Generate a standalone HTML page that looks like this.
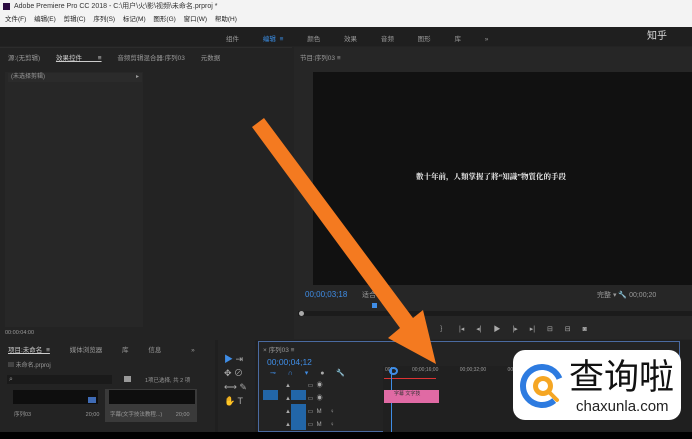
<!DOCTYPE html>
<html><head><meta charset="utf-8"><style>
*{margin:0;padding:0;box-sizing:border-box}
body{width:692px;height:439px;overflow:hidden;background:#232323;font-family:"Liberation Sans","Noto Sans CJK SC",sans-serif;position:relative;color:#9a9a9a;font-size:7px}
.a{position:absolute;white-space:nowrap}
</style></head><body>
<div class="a" style="left:0;top:0;width:692px;height:13px;background:#f3f3f3;color:#333;font-size:7px;line-height:13px;padding-left:14px">Adobe Premiere Pro CC 2018 - C:\用户\火\影\视频\未命名.prproj *</div>
<div class="a" style="left:3px;top:3px;width:7px;height:7px;background:#2a0a40"></div>
<div class="a" style="left:0;top:13px;width:692px;height:14px;background:#f3f3f3;color:#222;font-size:6.5px;line-height:14px;padding-left:5px;word-spacing:6px">文件(F) 编辑(E) 剪辑(C) 序列(S) 标记(M) 图形(G) 窗口(W) 帮助(H)</div>
<div class="a" style="left:0;top:27px;width:692px;height:19px;background:#1f1f1f"></div>
<div class="a" style="left:226px;top:33px;font-size:6.5px;word-spacing:22px">组件 <span style="color:#3a8ee6;word-spacing:2px">编辑 ≡</span> 颜色 效果 音频 图形 库 »</div>
<div class="a" style="left:647px;top:27px;color:#ddd;font-size:10px">知乎</div>
<!-- left panel -->
<div class="a" style="left:0;top:47px;width:292px;height:292px;background:#232323;border-top:1px solid #2c2c2c"></div>
<div class="a" style="left:8px;top:52px;font-size:6.5px;word-spacing:14px">源:(无剪辑) <span style="color:#ccc;text-decoration:underline">效果控件 ≡</span> 音频剪辑混合器:序列03 元数据</div>
<div class="a" style="left:5px;top:72px;width:138px;height:255px;background:#272727"></div>
<div class="a" style="left:8px;top:73px;width:134px;height:9px;background:#2b2b2b;font-size:6px;line-height:9px;padding-left:3px">(未选择剪辑)<span style="float:right;margin-right:3px">▸</span></div>
<div class="a" style="left:5px;top:330px;font-size:5.5px">00:00:04:00</div>
<!-- program monitor -->
<div class="a" style="left:294px;top:47px;width:398px;height:292px;background:#262626"></div>
<div class="a" style="left:300px;top:52px;font-size:6.5px">节目:序列03 ≡</div>
<div class="a" style="left:313px;top:72px;width:379px;height:213px;background:#111"></div>
<div class="a" style="left:416px;top:171px;color:#eee;font-size:7.5px;font-family:'Liberation Serif','Noto Serif CJK SC',serif;font-weight:bold">數十年前，人類掌握了將“知識”物質化的手段</div>
<div class="a" style="left:305px;top:290px;color:#3f8de6;font-size:8px">00;00;03;18</div>
<div class="a" style="left:362px;top:290px;font-size:7px">适合 ▾</div>
<div class="a" style="left:597px;top:290px;font-size:7px">完整 ▾  🔧 00;00;20</div>
<div class="a" style="left:372px;top:303px;width:5px;height:5px;background:#3f8de6"></div>
<div class="a" style="left:298px;top:311px;width:394px;height:5px;background:#1b1b1b"></div>
<div class="a" style="left:299px;top:311px;width:5px;height:5px;border-radius:50%;background:#aaa"></div>
<div class="a" style="left:440px;top:324px;font-size:7px;word-spacing:10px;color:#aaa">｝ |◂ ◂| ▶ |▸ ▸| ⊟ ⊟ ◙</div>
<!-- bottom area -->
<div class="a" style="left:0;top:340px;width:692px;height:92px;background:#1f1f1f"></div>
<div class="a" style="left:0;top:340px;width:215px;height:92px;background:#232323"></div>
<div class="a" style="left:8px;top:344px;font-size:6.5px;word-spacing:18px"><span style="color:#ccc;text-decoration:underline;word-spacing:2px">项目:未命名 ≡</span> 媒体浏览器 库 信息 <span style="margin-left:10px">»</span></div>
<div class="a" style="left:8px;top:360px;font-size:6px">▤ 未命名.prproj</div>
<div class="a" style="left:7px;top:375px;width:105px;height:9px;background:#1a1a1a;font-size:7px;line-height:9px;padding-left:2px">⌕</div>
<div class="a" style="left:124px;top:376px;width:7px;height:6px;background:#999"></div>
<div class="a" style="left:145px;top:376px;font-size:5.5px">1项已选择, 共 2 项</div>
<div class="a" style="left:13px;top:390px;width:85px;height:14px;background:#0e0e0e"></div>
<div class="a" style="left:88px;top:397px;width:8px;height:6px;background:#3f6bb5"></div>
<div class="a" style="left:105px;top:389px;width:92px;height:33px;background:#3a3a3a"></div>
<div class="a" style="left:109px;top:390px;width:86px;height:14px;background:#0e0e0e"></div>
<div class="a" style="left:14px;top:410px;font-size:5.5px">序列03 <span style="margin-left:53px">20;00</span></div>
<div class="a" style="left:110px;top:410px;font-size:5.5px">字幕(文字技法教程...) <span style="margin-left:12px">20;00</span></div>
<!-- tools -->
<div class="a" style="left:218px;top:340px;width:37px;height:92px;background:#232323"></div>
<div class="a" style="left:224px;top:352px;font-size:9px;line-height:14px;color:#aaa;white-space:pre"><span style="color:#3f8de6">▶</span> ⇥
✥ ⊘
⟷ ✎
✋ T</div>
<!-- timeline -->
<div class="a" style="left:258px;top:341px;width:422px;height:91px;background:#232323;border:1px solid #4a6aa0"></div>
<div class="a" style="left:263px;top:344px;font-size:6.5px">× 序列03 ≡</div>
<div class="a" style="left:267px;top:357px;color:#3f8de6;font-size:8.5px">00;00;04;12</div>
<div class="a" style="left:270px;top:369px;color:#3f8de6;font-size:7px;word-spacing:10px">⊸ ∩ ▾ <span style="color:#aaa">● 🔧</span></div>
<div class="a" style="left:263px;top:390px;width:15px;height:10px;background:#2266a8"></div>
<div class="a" style="left:291px;top:390px;width:15px;height:10px;background:#2266a8"></div>
<div class="a" style="left:291px;top:404px;width:15px;height:26px;background:#2266a8"></div>
<div class="a" style="left:285px;top:380px;font-size:6px;line-height:13px;color:#aaa;white-space:pre">▲          ▭  ◉
▲          ▭  ◉
▲          ▭  M     ♀
▲          ▭  M     ♀</div>
<div class="a" style="left:383px;top:366px;width:297px;height:66px;background:#202020"></div>
<div class="a" style="left:385px;top:367px;font-size:5px;word-spacing:20px">00 00;00;16;00 00;00;32;00 00;0</div>
<div class="a" style="left:384px;top:378px;width:52px;height:1px;background:#d33"></div>
<div class="a" style="left:391px;top:367px;width:1px;height:65px;background:#3f8de6"></div>
<div class="a" style="left:389px;top:367px;width:9px;height:8px;border-radius:50%;border:2px solid #3f8de6"></div>
<div class="a" style="left:384px;top:390px;width:55px;height:13px;background:#e06aa4;color:#333;font-size:5px;line-height:9px;padding-left:10px">字幕 文字技</div>
<div class="a" style="left:0;top:432px;width:692px;height:7px;background:#000"></div>
<!-- arrow -->
<svg class="a" style="left:0;top:0" width="692" height="439"><g fill="#f47a20"><polygon points="252,127 264,118 413,318 423,310 436,364 388,338 400,328"/></g></svg>
<!-- logo -->
<div class="a" style="left:513px;top:350px;width:168px;height:70px;background:#fff;border-radius:12px"></div>
<svg class="a" style="left:517px;top:355px" width="50" height="60"><circle cx="25" cy="31" r="19" fill="none" stroke="#2d7be0" stroke-width="6" stroke-dasharray="95 30" transform="rotate(50 25 31)"/><circle cx="26" cy="31" r="10" fill="#f5a623"/><circle cx="26" cy="31" r="5" fill="#fff"/><line x1="32" y1="37" x2="40" y2="45" stroke="#f5a623" stroke-width="4" stroke-linecap="round"/></svg>
<div class="a" style="left:569px;top:353px;color:#111;font-size:35px;line-height:44px;font-family:'Noto Sans CJK SC',sans-serif">查询啦</div>
<div class="a" style="left:576px;top:398px;color:#222;font-size:15px;line-height:17px">chaxunla.com</div>
</body></html>
